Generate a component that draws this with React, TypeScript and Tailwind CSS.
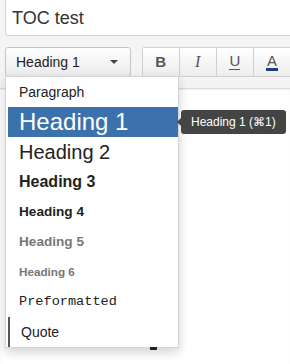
import React from 'react';

const items = [
  { label: 'Paragraph', cls: "text-[14px] text-[#222]" },
  { label: 'Heading 1', cls: "text-[24px] text-white", active: true },
  { label: 'Heading 2', cls: "text-[20px] text-[#222]" },
  { label: 'Heading 3', cls: "text-[16px] font-bold text-[#222]" },
  { label: 'Heading 4', cls: "text-[13.6px] font-bold text-[#222]" },
  { label: 'Heading 5', cls: "text-[13.6px] font-bold text-[#777]" },
  { label: 'Heading 6', cls: "text-[11.7px] font-bold text-[#777]" },
  { label: 'Preformatted', cls: "text-[13.6px] text-[#222] font-['Liberation_Mono',monospace]" },
  { label: 'Quote', cls: "text-[14px] text-[#222]", quote: true },
];

function ToolButton({ children, last }: { children: React.ReactNode; last?: boolean }) {
  return (
    <div
      className={
        'w-[38px] h-full flex items-center justify-center bg-gradient-to-b from-white to-[#ededed] border-[#cfcfcf] border-y ' +
        (last ? 'border-l' : 'border-l')
      }
    >
      {children}
    </div>
  );
}

export default function App() {
  return (
    <div className="w-[290px] h-[364px] bg-[#f4f4f4] overflow-hidden relative flex flex-col font-['Liberation_Sans',Arial,sans-serif]">
      {/* title input */}
      <div className="ml-[5px] mr-[-10px] -mt-[2px] h-[38px] shrink-0 bg-white border border-[#d4d4d4] rounded-b-[3px] flex items-center pl-[6px] pt-[2px]">
        <span className="text-[18px] text-[#333] leading-none">TOC test</span>
      </div>

      {/* toolbar */}
      <div className="flex items-start h-[30px] mt-[11px] ml-[5px] shrink-0">
        <div className="w-[128px] h-[30px] flex items-center justify-between pl-[10px] pr-[12px] rounded-[3px] border border-[#c4c4c4] bg-gradient-to-b from-white to-[#ebebeb]">
          <span className="text-[14px] text-[#222]">Heading 1</span>
          <span className="w-0 h-0 border-x-[4px] border-x-transparent border-t-[4px] border-t-[#444]" />
        </div>
        <div className="ml-[11px] flex h-[30px] rounded-l-[3px] overflow-hidden border-r-0">
          <ToolButton>
            <span className="text-[15px] font-bold text-[#555]">B</span>
          </ToolButton>
          <ToolButton>
            <span className="text-[16px] italic text-[#555] font-['Liberation_Serif',serif]">I</span>
          </ToolButton>
          <ToolButton>
            <span className="text-[15px] text-[#555] border-b border-[#555] leading-[14px] pb-[1px]">U</span>
          </ToolButton>
          <ToolButton last>
            <span className="text-[15px] text-[#555] border-b-[3px] border-[#1c3f84] leading-[14px] px-[1px]">A</span>
          </ToolButton>
        </div>
      </div>

      {/* editor body */}
      <div className="mt-[11px] flex-1 bg-white border-t border-[#dcdcdc] shadow-[inset_0_1px_2px_rgba(0,0,0,0.06)]" />

      {/* format menu */}
      <div className="absolute left-[5px] top-[76px] w-[174px] bg-white border border-[#d6d6d6] pl-[2px] shadow-[0_4px_10px_rgba(0,0,0,0.18)]">
        {items.map((it) => (
          <div
            key={it.label}
            className={
              'h-[30px] flex items-center pl-[11px] ' +
              (it.active ? 'bg-[#3b72ae] ' : '') +
              (it.quote ? 'border-l-2 border-[#555] pl-[9px] ' : '')
            }
          >
            <span className={'leading-none ' + it.cls}>{it.label}</span>
          </div>
        ))}
      </div>
      <div className="absolute left-[150px] top-[347px] w-[7px] h-[3px] bg-[#222]" />

      {/* tooltip */}
      <div className="absolute left-[181px] top-[110px] h-[24px] px-[10px] flex items-center rounded-[3px] bg-[#444]">
        <span className="absolute -left-[4px] top-[8px] w-0 h-0 border-y-[4px] border-y-transparent border-r-[4px] border-r-[#444]" />
        <span className="text-[12px] text-white whitespace-nowrap">Heading 1 (⌘1)</span>
      </div>
    </div>
  );
}
